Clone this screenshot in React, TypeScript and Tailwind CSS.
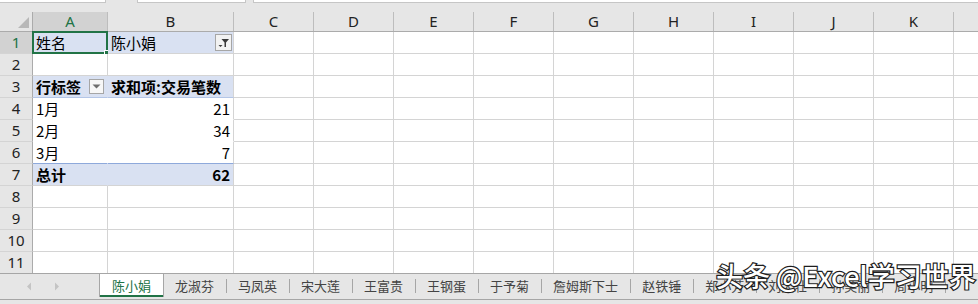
const COLS = [
  { l: 'A', w: 'w-[75px]' },
  { l: 'B', w: 'w-[126px]' },
  { l: 'C', w: 'w-[80px]' },
  { l: 'D', w: 'w-[80px]' },
  { l: 'E', w: 'w-[80px]' },
  { l: 'F', w: 'w-[80px]' },
  { l: 'G', w: 'w-[80px]' },
  { l: 'H', w: 'w-[80px]' },
  { l: 'I', w: 'w-[80px]' },
  { l: 'J', w: 'w-[80px]' },
  { l: 'K', w: 'w-[80px]' },
];

const TABS = ['龙淑芬', '马凤英', '宋大莲', '王富贵', '王钢蛋', '于予菊', '詹姆斯下士', '赵铁锤', '郑小芳', '刘大壮', '孙美丽', '周小明'];

const cjk = "font-['Noto_Sans_CJK_SC',sans-serif]";
const head = "font-['Noto_Sans','Noto_Sans_CJK_SC',sans-serif]";

type Cell = {
  text?: string;
  bg?: string;
  br?: string;
  bb?: string;
  bold?: boolean;
  right?: boolean;
  extra?: React.ReactNode;
};

const blue = 'bg-[#d9e1f2]';

const pivot: Record<number, [Cell, Cell]> = {
  1: [{ text: '姓名', bg: blue }, { text: '陈小娟', bg: blue, extra: <FilterButton /> }],
  3: [
    { text: '行标签', bg: blue, bold: true, br: 'border-r-[#d9e1f2]', bb: 'border-b-[#b4c6e7]', extra: <DropButton /> },
    { text: '求和项:交易笔数', bg: blue, bold: true, bb: 'border-b-[#b4c6e7]' },
  ],
  4: [{ text: '1月', br: 'border-r-white', bb: 'border-b-white' }, { text: '21', right: true, bb: 'border-b-white' }],
  5: [{ text: '2月', br: 'border-r-white', bb: 'border-b-white' }, { text: '34', right: true, bb: 'border-b-white' }],
  6: [{ text: '3月', br: 'border-r-white', bb: 'border-b-[#8ea9db]' }, { text: '7', right: true, bb: 'border-b-[#8ea9db]' }],
  7: [
    { text: '总计', bg: blue, bold: true, br: 'border-r-[#d9e1f2]' },
    { text: '62', bg: blue, bold: true, right: true },
  ],
};

function FilterButton() {
  return (
    <div className="absolute right-px top-[2px] w-[17px] h-[17px] border border-[#a6a6a6] bg-[#f2f2f2]">
      <svg width="15" height="15" viewBox="0 0 15 15">
        <polygon points="5.5,4 13,4 10,7.5 10,12 8.5,12 8.5,7.5" fill="#3a3a3a" />
        <polygon points="2.5,10 6.5,10 4.5,12" fill="#3a3a3a" />
      </svg>
    </div>
  );
}

function DropButton() {
  return (
    <div className="absolute right-[3px] top-[3px] w-[15px] h-[15px] border border-[#a6a6a6] bg-[#f7f7f7] flex items-center justify-center">
      <svg width="9" height="5" viewBox="0 0 9 5">
        <polygon points="0.5,0.5 8.5,0.5 4.5,4.5" fill="#6e6e6e" />
      </svg>
    </div>
  );
}

function Row({ n, last }: { n: number; last?: boolean }) {
  const sel = n === 1;
  const p = pivot[n];
  return (
    <div className={`flex ${last ? 'h-[21px]' : 'h-[22px]'}`}>
      <div
        className={`w-[33px] shrink-0 border-r border-r-[#ababab] ${last ? '' : 'border-b border-b-[#d4d4d4]'} ${sel ? 'bg-[#d2d2d2] text-[#217346]' : 'bg-[#e6e6e6] text-[#222]'} ${head} text-[15px] flex items-center justify-center`}
      >
        {n}
      </div>
      {COLS.map((c, i) => {
        const cell: Cell = p && i < 2 ? p[i] : {};
        return (
          <div
            key={c.l}
            className={`relative ${c.w} shrink-0 border-r ${cell.br ?? 'border-r-[#d4d4d4]'} ${last ? '' : `border-b ${cell.bb ?? 'border-b-[#d4d4d4]'}`} ${cell.bg ?? 'bg-white'} ${cjk} text-[15px] text-black flex items-center ${cell.right ? 'justify-end pr-[3px]' : 'pl-[3px]'} ${cell.bold ? 'font-bold' : ''}`}
          >
            <span className="leading-none">{cell.text}</span>
            {cell.extra}
            {sel && i === 0 && (
              <div className="absolute -left-px -top-px -right-px -bottom-px border-2 border-[#217346]">
                <div className="absolute -right-[5px] -bottom-[5px] w-[7px] h-[7px] bg-[#217346] border border-white" />
              </div>
            )}
          </div>
        );
      })}
      <div className={`flex-1 bg-white ${last ? '' : 'border-b border-b-[#d4d4d4]'}`} />
    </div>
  );
}

export default function App() {
  return (
    <div className="relative w-[978px] h-[304px] overflow-hidden bg-[#e6e6e6] select-none">
      {/* formula bar remnants */}
      <div className="flex h-[3px]">
        <div className="w-[106px] bg-white border-b border-r border-[#c6c6c6]" />
        <div className="w-[31px]" />
        <div className="w-[109px] bg-white border-b border-x border-[#c6c6c6]" />
        <div className="w-[7px]" />
        <div className="flex-1 bg-white border-b border-l border-[#c6c6c6]" />
      </div>

      {/* column headers */}
      <div className="flex h-[29px] pt-[9px] border-b border-[#ababab]">
        <div className="w-[33px] shrink-0 border-r border-[#ababab] relative">
          <svg className="absolute right-[3px] bottom-[3px]" width="11" height="11" viewBox="0 0 11 11">
            <polygon points="11,0 11,11 0,11" fill="#b8b8b8" />
          </svg>
        </div>
        {COLS.map((c) => (
          <div
            key={c.l}
            className={`${c.w} shrink-0 border-r border-[#bdbdbd] flex items-center justify-center ${head} text-[15px] ${c.l === 'A' ? 'bg-[#d2d2d2] text-[#217346]' : 'text-[#222]'}`}
          >
            {c.l}
          </div>
        ))}
        <div className="flex-1" />
      </div>

      {/* grid rows */}
      {Array.from({ length: 11 }, (_, i) => (
        <Row key={i} n={i + 1} last={i === 10} />
      ))}

      {/* sheet tabs */}
      <div className={`flex h-[27px] border-t border-b border-[#a6a6a6] ${cjk} text-[13px]`}>
        <div className="w-[100px] shrink-0 flex items-center">
          <svg className="ml-[26px]" width="6" height="9" viewBox="0 0 6 9">
            <polygon points="5,0.5 5,8.5 1,4.5" fill="#c4c4c4" />
          </svg>
          <svg className="ml-[22px]" width="6" height="9" viewBox="0 0 6 9">
            <polygon points="1,0.5 1,8.5 5,4.5" fill="#c4c4c4" />
          </svg>
        </div>
        <div className="relative shrink-0 h-[23px] px-3 bg-white border-x border-[#a6a6a6] -ml-px flex items-center text-[#217346]">
          陈小娟
          <div className="absolute left-0 right-0 bottom-0 h-[2px] bg-[#217346]" />
        </div>
        {TABS.map((t) => (
          <div key={t} className="shrink-0 h-[23px] flex items-center text-[#444]">
            <span className="pl-[11px] pr-3">{t}</span>
            <span className="w-px h-[14px] bg-[#a6a6a6]" />
          </div>
        ))}
      </div>

      {/* watermark */}
      <div
        className={`absolute left-[716px] top-[262px] ${cjk} font-medium text-[27px] leading-none text-white [-webkit-text-stroke:2.4px_#1e1e1e] [paint-order:stroke_fill] whitespace-nowrap`}
      >
        头条 @Excel学习世界
      </div>
    </div>
  );
}
